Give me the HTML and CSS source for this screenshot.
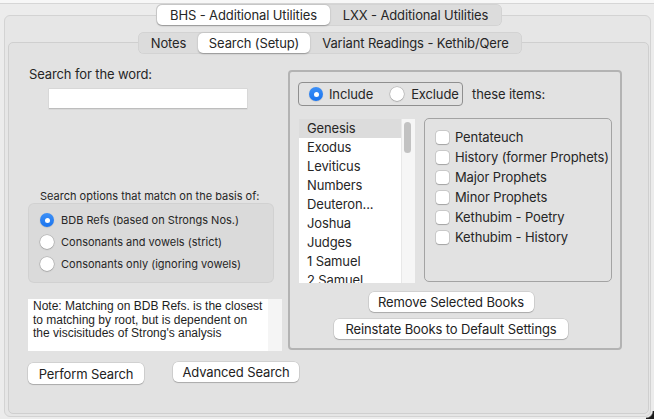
FILE: index.html
```html
<!DOCTYPE html>
<html>
<head>
<meta charset="utf-8">
<link rel="stylesheet" href="styles.css">
</head>
<body>
<div class="edge"></div>
<div class="tabview">
  <div class="seg seg-outer">
    <span class="seg-item sel w-bhs">BHS - Additional Utilities</span>
    <span class="seg-item w-lxx">LXX - Additional Utilities</span>
  </div>
  <div class="box-outer">
    <div class="tabview">
      <div class="seg seg-inner">
        <span class="seg-item w-notes">Notes</span>
        <span class="seg-item sel w-search">Search (Setup)</span>
        <span class="seg-item w-variant">Variant Readings - Kethib/Qere</span>
      </div>
      <div class="box-inner">
        <div class="left">
          <div class="lbl">Search for the word:</div>
          <div class="input"></div>
          <div class="opt-lbl">Search options that match on the basis of:</div>
          <div class="radio-box">
            <div class="radio-row"><span class="radio on"></span><span>BDB Refs (based on Strongs Nos.)</span></div>
            <div class="radio-row"><span class="radio"></span><span>Consonants and vowels (strict)</span></div>
            <div class="radio-row"><span class="radio"></span><span>Consonants only (ignoring vowels)</span></div>
          </div>
          <div class="note">Note: Matching on BDB Refs. is the closest<br>to matching by root, but is dependent on<br>the viscisitudes of Strong's analysis</div>
          <div class="btn-row">
            <div class="btn btn-perform">Perform Search</div>
            <div class="btn btn-adv">Advanced Search</div>
          </div>
        </div>
        <div class="panel">
          <div class="inc-row">
            <div class="inc-box">
              <div class="inc-opt"><span class="radio on"></span><span>Include</span></div>
              <div class="inc-opt exc"><span class="radio"></span><span>Exclude</span></div>
            </div>
            <div class="these">these items:</div>
          </div>
          <div class="lists">
            <div class="list">
              <div class="list-items">
                <div class="list-item sel">Genesis</div>
                <div class="list-item">Exodus</div>
                <div class="list-item">Leviticus</div>
                <div class="list-item">Numbers</div>
                <div class="list-item">Deuteron...</div>
                <div class="list-item">Joshua</div>
                <div class="list-item">Judges</div>
                <div class="list-item">1 Samuel</div>
                <div class="list-item">2 Samuel</div>
              </div>
              <div class="scroll"><div class="thumb"></div></div>
            </div>
            <div class="checks">
              <div class="check-row"><span class="cb"></span><span>Pentateuch</span></div>
              <div class="check-row"><span class="cb"></span><span>History (former Prophets)</span></div>
              <div class="check-row"><span class="cb"></span><span>Major Prophets</span></div>
              <div class="check-row"><span class="cb"></span><span>Minor Prophets</span></div>
              <div class="check-row"><span class="cb"></span><span>Kethubim - Poetry</span></div>
              <div class="check-row"><span class="cb"></span><span>Kethubim - History</span></div>
            </div>
          </div>
          <div class="pbtns">
            <div class="btn btn-remove">Remove Selected Books</div>
            <div class="btn btn-reinstate">Reinstate Books to Default Settings</div>
          </div>
        </div>
      </div>
    </div>
  </div>
</div>
<div class="corner"></div>
</body>
</html>
```
FILE: styles.css
```css
html, body {
  margin: 0;
  padding: 0;
}
body {
  width: 654px;
  height: 419px;
  overflow: hidden;
  position: relative;
  background: #ececec;
  font-family: Inter, "Liberation Sans", sans-serif;
  font-size: 13px;
  letter-spacing: -0.12px;
  color: #262626;
}
.edge {
  height: 3px;
  background: #f7f7f7;
  border-bottom: 1px solid #d6d6d6;
}
.tabview {
  display: flex;
  flex-direction: column;
  align-items: center;
}
.seg {
  display: flex;
  height: 22px;
  padding: 1px;
  box-sizing: border-box;
  background: #dcdcdc;
  border-radius: 6px;
  position: relative;
  z-index: 1;
  box-shadow: inset 0 0 0 0.5px rgba(0, 0, 0, 0.08);
}
.seg-item {
  display: flex;
  align-items: center;
  justify-content: center;
  border-radius: 5px;
  white-space: nowrap;
}
.seg-item.sel {
  background: #fff;
  box-shadow: 0 0.5px 1.5px rgba(0, 0, 0, 0.3);
}
.seg-outer {
  margin-left: 4px;
  margin-bottom: -11px;
}
.w-bhs { width: 173px; }
.w-lxx { width: 171px; }
.seg-inner {
  margin-left: 3px;
  margin-bottom: -12px;
}
.w-notes { width: 59px; }
.w-search { width: 112px; }
.w-variant { width: 211px; }

.box-outer {
  align-self: flex-start;
  margin-left: 4px;
  width: 647px;
  height: 402px;
  box-sizing: border-box;
  border: 1px solid #d3d3d3;
  border-radius: 6px;
  background: #e6e6e6;
  padding: 16px 1px 2px 3px;
}
.box-inner {
  align-self: stretch;
  height: 372px;
  box-sizing: border-box;
  border: 1px solid #cfcfcf;
  border-radius: 5px;
  background: #e2e2e2;
  display: flex;
  align-items: flex-start;
  padding: 23px 0 0 19px;
  gap: 6px;
}

.left {
  width: 254px;
  flex: none;
  display: flex;
  flex-direction: column;
  align-items: flex-start;
}
.lbl {
  line-height: 16px;
  margin-left: 1px;
}
.input {
  margin: 7px 0 0 21px;
  width: 198px;
  height: 20px;
  box-sizing: border-box;
  background: #fff;
  box-shadow: 0 0 0 0.5px #cdcdcd;
  border-bottom: 1px solid #bdbdbd;
}
.opt-lbl {
  margin: 80px 0 0 12px;
  font-size: 11px;
  line-height: 14px;
  letter-spacing: 0;
}
.radio-box {
  width: 246px;
  height: 80px;
  box-sizing: border-box;
  background: #dadada;
  border-radius: 6px;
  box-shadow: inset 0 0 0 1px rgba(0, 0, 0, 0.04);
  padding: 6px 0 0 12px;
}
.radio-row {
  display: flex;
  align-items: center;
  height: 22px;
  gap: 7px;
  font-size: 11px;
  letter-spacing: 0;
}
.radio {
  width: 14px;
  height: 14px;
  border-radius: 50%;
  background: #fff;
  box-shadow: 0 0 0 0.5px rgba(0, 0, 0, 0.2), 0 0.5px 1.5px rgba(0, 0, 0, 0.25);
  flex: none;
  box-sizing: border-box;
}
.radio.on {
  background: linear-gradient(#3d90f7, #1a74ee);
  display: flex;
  align-items: center;
  justify-content: center;
  box-shadow: 0 0.5px 1px rgba(0, 0, 0, 0.2);
}
.radio.on::after {
  content: "";
  width: 5px;
  height: 5px;
  border-radius: 50%;
  background: #fff;
}
.note {
  margin-top: 16px;
  width: 254px;
  height: 52px;
  box-sizing: border-box;
  background: #fff;
  border-right: 14px solid #f5f5f5;
  padding: 1px 0 0 5px;
  font-family: "Liberation Sans", Arial, sans-serif;
  font-size: 12px;
  line-height: 13.5px;
  letter-spacing: 0;
  color: #1e1e1e;
  white-space: nowrap;
}
.btn-row {
  display: flex;
  align-items: flex-start;
  margin-top: 11px;
  gap: 29px;
}
.btn {
  display: flex;
  align-items: center;
  justify-content: center;
  background: #fff;
  border-radius: 5px;
  box-shadow: 0 0 0 0.5px rgba(0, 0, 0, 0.15), 0 1px 1px rgba(0, 0, 0, 0.18);
  white-space: nowrap;
  color: #222;
}
.btn-perform {
  width: 116px;
  height: 21px;
  margin-top: 1px;
}
.btn-adv {
  width: 126px;
  height: 20px;
}

.panel {
  margin-top: 4px;
  width: 334px;
  height: 280px;
  flex: none;
  box-sizing: border-box;
  border: 2px solid #b3b3b3;
  border-radius: 4px;
  padding-top: 10px;
  display: flex;
  flex-direction: column;
}
.inc-row {
  display: flex;
  align-items: center;
  margin-left: 8px;
}
.inc-box {
  display: flex;
  align-items: center;
  height: 24px;
  width: 165px;
  flex: none;
  box-sizing: border-box;
  border: 1px solid #8f8f8f;
  border-radius: 4px;
  padding-left: 10px;
  white-space: nowrap;
}
.inc-opt {
  display: flex;
  align-items: center;
  gap: 6px;
}
.inc-opt.exc {
  margin-left: 17px;
  gap: 7px;
}
.these {
  margin-left: 9px;
}
.lists {
  display: flex;
  align-items: flex-start;
  margin: 12px 0 0 9px;
  gap: 9px;
}
.list {
  margin-top: 1px;
  width: 116px;
  height: 164px;
  background: #fff;
  display: flex;
  overflow: hidden;
  flex: none;
}
.list-items {
  flex: 1;
}
.list-item {
  height: 19px;
  line-height: 19px;
  padding-left: 8px;
  white-space: nowrap;
}
.list-item.sel {
  background: #dcdcdc;
}
.scroll {
  width: 14px;
  flex: none;
  background: #f6f6f6;
  border-left: 1px solid #e8e8e8;
  box-sizing: border-box;
  padding: 3px 0 0 2px;
}
.thumb {
  width: 7px;
  height: 31px;
  background: #c2c2c2;
  border-radius: 4px;
}
.checks {
  width: 188px;
  height: 164px;
  flex: none;
  box-sizing: border-box;
  border: 1px solid #a3a3a3;
  border-radius: 5px;
  padding: 8px 0 0 11px;
}
.check-row {
  display: flex;
  align-items: center;
  height: 20px;
  gap: 6px;
  white-space: nowrap;
}
.cb {
  width: 13px;
  height: 13px;
  flex: none;
  background: #fff;
  border-radius: 3px;
  box-shadow: 0 0 0 0.5px rgba(0, 0, 0, 0.18), 0 0.5px 1px rgba(0, 0, 0, 0.2);
}
.pbtns {
  display: flex;
  flex-direction: column;
  align-items: center;
  padding-right: 8px;
}
.btn-remove {
  margin-top: 9px;
  width: 165px;
  height: 20px;
}
.btn-reinstate {
  margin-top: 7px;
  width: 234px;
  height: 20px;
}
.corner {
  position: absolute;
  right: 0;
  bottom: 0;
  width: 8px;
  height: 8px;
  background: radial-gradient(circle at 0 0, transparent 6px, #1c1c1c 7.5px);
}
```
